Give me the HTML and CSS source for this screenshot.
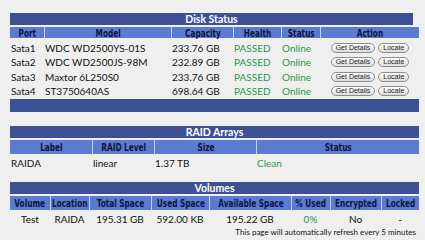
FILE: index.html
```html
<!DOCTYPE html>
<html>
<head>
<meta charset="utf-8">
<link rel="stylesheet" href="styles.css">
</head>
<body>
<section class="panel disk">
  <div class="title narrow">Disk Status</div>
  <div class="row head">
    <div><span>Port</span></div><div><span>Model</span></div><div><span>Capacity</span></div><div><span>Health</span></div><div><span>Status</span></div><div><span>Action</span></div>
  </div>
  <div class="rows">
    <div class="row data">
      <div>Sata1</div><div>WDC WD2500YS-01S</div><div>233.76 GB</div><div class="ok">PASSED</div><div class="ok">Online</div>
      <div class="actions"><span class="btn">Get Details</span><span class="btn">Locate</span></div>
    </div>
    <div class="row data">
      <div>Sata2</div><div>WDC WD2500JS-98M</div><div>232.89 GB</div><div class="ok">PASSED</div><div class="ok">Online</div>
      <div class="actions"><span class="btn">Get Details</span><span class="btn">Locate</span></div>
    </div>
    <div class="row data">
      <div>Sata3</div><div>Maxtor 6L250S0</div><div>233.76 GB</div><div class="ok">PASSED</div><div class="ok">Online</div>
      <div class="actions"><span class="btn">Get Details</span><span class="btn">Locate</span></div>
    </div>
    <div class="row data">
      <div>Sata4</div><div>ST3750640AS</div><div>698.64 GB</div><div class="ok">PASSED</div><div class="ok">Online</div>
      <div class="actions"><span class="btn">Get Details</span><span class="btn">Locate</span></div>
    </div>
  </div>
  <div class="bar"></div>
</section>

<section class="panel raid">
  <div class="title">RAID Arrays</div>
  <div class="row head tall">
    <div><span>Label</span></div><div><span>RAID Level</span></div><div><span>Size</span></div><div><span>Status</span></div>
  </div>
  <div class="row data single">
    <div>RAIDA</div><div>linear</div><div>1.37 TB</div><div class="ok">Clean</div>
  </div>
</section>

<section class="panel vol">
  <div class="title">Volumes</div>
  <div class="row head tall">
    <div><span>Volume</span></div><div><span>Location</span></div><div><span>Total Space</span></div><div><span>Used Space</span></div><div><span>Available Space</span></div><div><span>% Used</span></div><div><span>Encrypted</span></div><div><span>Locked</span></div>
  </div>
  <div class="row data centered">
    <div>Test</div><div>RAIDA</div><div>195.31 GB</div><div>592.00 KB</div><div>195.22 GB</div><div class="ok">0%</div><div>No</div><div>-</div>
  </div>
  <p class="note">This page will automatically refresh every 5 minutes</p>
</section>
</body>
</html>
```

FILE: styles.css
```css
html, body {
  margin: 0;
  padding: 0;
  background: #efefef;
}
body {
  padding: 13px 0 0 10px;
  font-family: Lato, "Open Sans", sans-serif;
  font-size: 10px;
  color: #111;
}
.panel {
  width: 409px;
  display: flex;
  flex-direction: column;
}
.title {
  height: 12px;
  line-height: 12px;
  background: #3c5194;
  color: #fff;
  text-align: center;
  font-size: 10.5px;
  font-weight: 700;
  margin-bottom: 2px;
}
.title.narrow {
  width: 403px;
}
.row {
  display: grid;
}
.disk .row { grid-template-columns: 34px 127px 62px 48px 39px 99px; }
.raid .row { grid-template-columns: 82px 62px 102px 163px; }
.vol .row  { grid-template-columns: 40px 39px 62px 58px 82px 39px 51px 38px; }

.head {
  height: 11px;
  background: #5a7bd0;
  font-family: "DejaVu Sans Condensed", "DejaVu Sans", sans-serif;
  font-weight: 700;
  font-size: 10.5px;
  color: #0d1540;
}
.head.tall {
  height: 14px;
}
.head > div {
  display: flex;
  align-items: center;
  justify-content: center;
  white-space: nowrap;
  border-left: 1px solid #c8d2ee;
  box-sizing: border-box;
  min-width: 0;
}
.head > div:first-child {
  border-left: none;
}
.head span {
  display: inline-block;
  flex: none;
  transform: scaleX(0.78);
}
.rows {
  padding-top: 3px;
}
.data {
  height: 14.25px;
  align-items: center;
}
.data > div {
  padding-left: 1px;
  white-space: nowrap;
}
.single {
  height: 18px;
  margin-bottom: 10px;
}
.centered {
  height: 15px;
  margin-top: 1px;
}
.centered > div {
  text-align: center;
  padding-left: 0;
}
.ok {
  color: #1f9a48;
}
.actions {
  display: flex;
  justify-content: center;
  gap: 3px;
}
.btn {
  display: inline-block;
  height: 10px;
  line-height: 8px;
  box-sizing: border-box;
  padding: 0 4px;
  border: 1px solid #8e8e8e;
  border-radius: 5px;
  background: linear-gradient(#ffffff, #dcdcdc);
  font-family: "Liberation Sans", sans-serif;
  font-size: 7px;
  color: #222;
}
.bar {
  height: 13px;
  background: #3c5194;
  margin-top: 1px;
  margin-bottom: 14px;
}
.note {
  margin: 0;
  height: 12px;
  line-height: 12px;
  text-align: right;
  padding-right: 3px;
  font-size: 8px;
}
```
